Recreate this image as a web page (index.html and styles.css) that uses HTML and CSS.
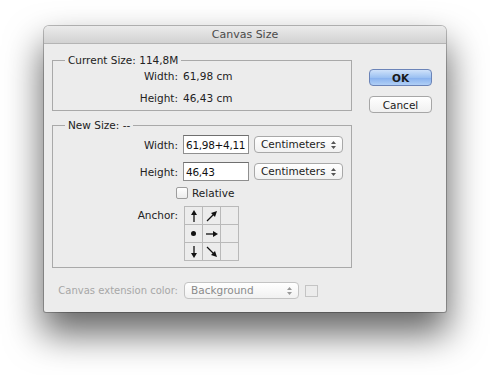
FILE: index.html
```html
<!DOCTYPE html>
<html lang="en">
<head>
    <meta charset="UTF-8">
    <title>Canvas Size</title>
    <link rel="stylesheet" href="styles.css">
</head>
<body>
<div class="window">
    <div class="titlebar">Canvas Size</div>

    <div class="content">
        <div class="main">
            <fieldset class="group group-current">
                <legend>Current Size: 114,8M</legend>
                <div class="row">
                    <span class="label">Width:</span>
                    <span class="value">61,98 cm</span>
                </div>
                <div class="row">
                    <span class="label">Height:</span>
                    <span class="value">46,43 cm</span>
                </div>
            </fieldset>

            <fieldset class="group group-new">
                <legend>New Size: --</legend>
                <div class="row row-input">
                    <span class="label">Width:</span>
                    <input class="field" type="text" value="61,98+4,11">
                    <div class="select">Centimeters
                        <svg class="caret" width="5" height="8" viewBox="0 0 5 8"><path d="M2.5 0L5 3H0zM2.5 8L0 5h5z" fill="#555"/></svg>
                    </div>
                </div>
                <div class="row row-input">
                    <span class="label">Height:</span>
                    <input class="field" type="text" value="46,43">
                    <div class="select">Centimeters
                        <svg class="caret" width="5" height="8" viewBox="0 0 5 8"><path d="M2.5 0L5 3H0zM2.5 8L0 5h5z" fill="#555"/></svg>
                    </div>
                </div>
                <div class="row row-check">
                    <span class="checkbox"></span>
                    <span class="check-label">Relative</span>
                </div>
                <div class="row row-anchor">
                    <span class="label">Anchor:</span>
                    <div class="anchor">
                        <div class="cell">
                            <svg width="12" height="14" viewBox="0 0 12 14"><path d="M6 13V5" stroke="#111" stroke-width="1.3"/><path d="M6 1L3 6h6z" fill="#111"/></svg>
                        </div>
                        <div class="cell">
                            <svg width="14" height="14" viewBox="0 0 14 14"><path d="M2 12L9 5" stroke="#111" stroke-width="1.3"/><path d="M12 2L6 4l4 4z" fill="#111"/></svg>
                        </div>
                        <div class="cell"></div>
                        <div class="cell">
                            <span class="dot"></span>
                        </div>
                        <div class="cell">
                            <svg width="14" height="12" viewBox="0 0 14 12"><path d="M1 6h8" stroke="#111" stroke-width="1.3"/><path d="M13 6L8 3v6z" fill="#111"/></svg>
                        </div>
                        <div class="cell"></div>
                        <div class="cell">
                            <svg width="12" height="14" viewBox="0 0 12 14"><path d="M6 1v8" stroke="#111" stroke-width="1.3"/><path d="M6 13L3 8h6z" fill="#111"/></svg>
                        </div>
                        <div class="cell">
                            <svg width="14" height="14" viewBox="0 0 14 14"><path d="M2 2L9 9" stroke="#111" stroke-width="1.3"/><path d="M12 12L6 10l4-4z" fill="#111"/></svg>
                        </div>
                        <div class="cell"></div>
                    </div>
                </div>
            </fieldset>
        </div>

        <div class="buttons">
            <button class="btn btn-default">OK</button>
            <button class="btn">Cancel</button>
        </div>
    </div>

    <div class="extension">
        <span class="label label-disabled">Canvas extension color:</span>
        <div class="select select-wide select-disabled">Background
            <svg class="caret" width="5" height="8" viewBox="0 0 5 8"><path d="M2.5 0L5 3H0zM2.5 8L0 5h5z" fill="#999"/></svg>
        </div>
        <span class="swatch"></span>
    </div>
</div>
</body>
</html>
```

FILE: styles.css
```css
* {
    box-sizing: border-box;
}

html, body {
    height: 100%;
}

body {
    margin: 0;
    padding: 26px 0 0 44px;
    background: #fff;
    font-family: 'DejaVu Sans', sans-serif;
    font-size: 10.5px;
    color: #222;
}

.window {
    width: 402px;
    height: 286px;
    background: #ececec;
    border-radius: 5px 5px 2px 2px;
    box-shadow: 0 0 0 1px rgba(0, 0, 0, 0.25), 0 20px 36px 2px rgba(0, 0, 0, 0.6);
}

.titlebar {
    height: 18px;
    line-height: 18px;
    text-align: center;
    font-size: 11px;
    color: #4a4a4a;
    background: linear-gradient(#ebebeb, #d2d2d2);
    border-bottom: 1px solid #b4b4b4;
    border-radius: 5px 5px 0 0;
}

.content {
    display: flex;
    padding: 10px 0 0 8px;
}

.main {
    width: 300px;
}

.group {
    margin: 0;
    padding: 0 0 4px;
    border: 1px solid #a9a9a9;
    min-width: 0;
}

.group legend {
    margin-left: 12px;
    padding: 0 3px;
    line-height: 13px;
}

.group-current .row {
    height: 16px;
    margin-top: 6px;
}

.group-current .row:first-of-type {
    margin-top: 1px;
}

.group-new {
    margin-top: 8px;
    padding-bottom: 6px;
}

.row {
    display: flex;
    align-items: center;
}

.label {
    flex-shrink: 0;
    width: 125px;
    text-align: right;
    white-space: nowrap;
    margin-right: 5px;
}

.row-input {
    height: 19px;
    margin-top: 8px;
}

.row-input:first-of-type {
    margin-top: 3px;
}

.field {
    width: 66px;
    height: 19px;
    margin: 0 5px 0 0;
    padding: 0 2px;
    border: 1px solid #8f8f8f;
    border-top-color: #6f6f6f;
    background: #fff;
    font-family: inherit;
    font-size: 10.5px;
    letter-spacing: -0.3px;
    color: #111;
    outline: none;
}

.select {
    position: relative;
    width: 89px;
    height: 17px;
    line-height: 15px;
    padding-left: 6px;
    border: 1px solid #a8a8a8;
    border-radius: 4px;
    background: linear-gradient(#ffffff, #f1f1f1);
    color: #222;
}

.caret {
    position: absolute;
    right: 6px;
    top: 4px;
}

.row-check {
    height: 12px;
    margin-top: 6px;
    padding-left: 123px;
}

.checkbox {
    width: 12px;
    height: 12px;
    border: 1px solid #9d9d9d;
    border-radius: 2px;
    background: linear-gradient(#fff, #ececec);
    margin-right: 4px;
}

.row-anchor {
    align-items: flex-start;
    margin-top: 7px;
}

.row-anchor .label {
    margin: 3px 6px 0 0;
}

.anchor {
    display: grid;
    grid-template-columns: repeat(3, 18px);
    grid-template-rows: repeat(3, 18px);
    border-left: 1px solid #b9b9b9;
    border-top: 1px solid #b9b9b9;
}

.cell {
    display: flex;
    align-items: center;
    justify-content: center;
    border-right: 1px solid #b9b9b9;
    border-bottom: 1px solid #b9b9b9;
}

.dot {
    width: 5px;
    height: 5px;
    border-radius: 50%;
    background: #111;
}

.buttons {
    display: flex;
    flex-direction: column;
    margin: 15px 0 0 17px;
}

.btn {
    width: 63px;
    height: 17px;
    padding: 0;
    border: 1px solid #a6a6a6;
    border-radius: 4px;
    background: linear-gradient(#ffffff, #f0f0f0);
    font-family: inherit;
    font-size: 10.5px;
    color: #1a1a1a;
    margin-bottom: 10px;
}

.btn-default {
    border-color: #6b84b8;
    background: linear-gradient(#cfe2fa, #9cc1f2 50%, #86b0ee 51%, #b0cff6);
    font-weight: bold;
}

.extension {
    display: flex;
    align-items: center;
    margin-top: 14px;
    padding-left: 9px;
}

.label-disabled {
    font-size: 10px;
    color: #a7a7a7;
    margin-right: 6px;
}

.select-wide {
    width: 115px;
    height: 17px;
}

.select-disabled {
    color: #8a8a8a;
    border-color: #c3c3c3;
}

.swatch {
    width: 13px;
    height: 12px;
    margin-left: 6px;
    border: 1px solid #c4c4c4;
    background: #ececec;
}
```
